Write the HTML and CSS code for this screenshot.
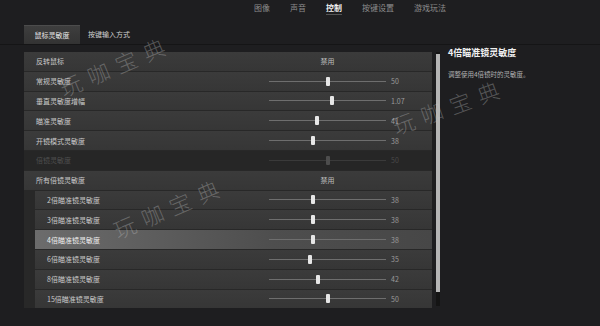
FILE: index.html
```html
<!DOCTYPE html>
<html lang="zh-CN">
<head>
    <meta charset="UTF-8">
    <title>控制设置</title>
    <link rel="stylesheet" href="styles.css">
</head>
<body>
    <div id="screen">
        <ul id="nav">
            <li>图像</li>
            <li>声音</li>
            <li class="selected">控制</li>
            <li>按键设置</li>
            <li>游戏玩法</li>
        </ul>
        <div id="top-bar">
            <ul id="sub-tab">
                <li class="selected">鼠标灵敏度</li>
                <li>按键输入方式</li>
            </ul>
        </div>
        <div id="main">
            <div id="list">
                <div class="row">
                    <span class="label">反转鼠标</span>
                    <span class="choice">禁用</span>
                </div>
                <div class="row">
                    <span class="label">常规灵敏度</span>
                    <span class="slider"><i style="left: 50%"></i></span>
                    <span class="num">50</span>
                </div>
                <div class="row">
                    <span class="label">垂直灵敏度增幅</span>
                    <span class="slider"><i style="left: 54%"></i></span>
                    <span class="num">1.07</span>
                </div>
                <div class="row">
                    <span class="label">瞄准灵敏度</span>
                    <span class="slider"><i style="left: 41%"></i></span>
                    <span class="num">41</span>
                </div>
                <div class="row">
                    <span class="label">开镜模式灵敏度</span>
                    <span class="slider"><i style="left: 38%"></i></span>
                    <span class="num">38</span>
                </div>
                <div class="row disabled">
                    <span class="label">倍镜灵敏度</span>
                    <span class="slider"><i style="left: 50%"></i></span>
                    <span class="num">50</span>
                </div>
                <div class="row">
                    <span class="label">所有倍镜灵敏度</span>
                    <span class="choice">禁用</span>
                </div>
                <div class="row sub">
                    <span class="label">2倍瞄准镜灵敏度</span>
                    <span class="slider"><i style="left: 38%"></i></span>
                    <span class="num">38</span>
                </div>
                <div class="row sub">
                    <span class="label">3倍瞄准镜灵敏度</span>
                    <span class="slider"><i style="left: 38%"></i></span>
                    <span class="num">38</span>
                </div>
                <div class="row sub active">
                    <span class="label">4倍瞄准镜灵敏度</span>
                    <span class="slider"><i style="left: 38%"></i></span>
                    <span class="num">38</span>
                </div>
                <div class="row sub">
                    <span class="label">6倍瞄准镜灵敏度</span>
                    <span class="slider"><i style="left: 35%"></i></span>
                    <span class="num">35</span>
                </div>
                <div class="row sub">
                    <span class="label">8倍瞄准镜灵敏度</span>
                    <span class="slider"><i style="left: 42%"></i></span>
                    <span class="num">42</span>
                </div>
                <div class="row sub">
                    <span class="label">15倍瞄准镜灵敏度</span>
                    <span class="slider"><i style="left: 50%"></i></span>
                    <span class="num">50</span>
                </div>
            </div>
            <div id="scroll"><b></b></div>
            <div id="info">
                <h2>4倍瞄准镜灵敏度</h2>
                <p>调整使用4倍镜时的灵敏度。</p>
            </div>
        </div>
        <span class="mark mark-1">玩咖宝典</span>
        <span class="mark mark-2">玩咖宝典</span>
        <span class="mark mark-3">玩咖宝典</span>
    </div>
</body>
</html>
```
FILE: styles.css
```css
*{
    margin: 0;
    padding: 0;
    box-sizing: border-box;
}
ul{
    list-style: none;
}
body{
    background: #1d1d1f;
    font-family: "Noto Sans CJK SC", "Noto Sans", sans-serif;
    color: #b8b8b8;
}
#screen{
    width: 600px;
    height: 326px;
    position: relative;
    overflow: hidden;
    background: #1e1e20;
}
#nav{
    display: flex;
    gap: 20px;
    padding: 2px 0 0 254px;
    height: 25px;
    font-size: 8px;
    line-height: 12px;
    color: #8d8d8d;
}
#nav .selected{
    color: #f2f2f2;
    font-weight: bold;
    border-bottom: 1px solid #555;
    height: 13px;
}
#top-bar{
    border-bottom: 1px solid #151516;
    height: 20px;
    padding-left: 24px;
}
#sub-tab{
    display: flex;
    gap: 8px;
}
#sub-tab li{
    height: 19px;
    line-height: 18px;
    font-size: 7px;
    color: #cfcfcf;
}
#sub-tab .selected{
    width: 56px;
    text-align: center;
    background: linear-gradient(#3e3e3e, #333);
    border-top: 1px solid #4c4c4c;
    color: #e8e8e8;
}
#main{
    display: flex;
    padding-top: 7px;
}
#list{
    width: 408px;
    margin-left: 24px;
    background: #282828;
    display: flex;
    flex-direction: column;
    gap: 1px;
}
.row{
    height: 18.8px;
    display: flex;
    align-items: center;
    background: linear-gradient(#3b3b3b, #363636);
    font-size: 7px;
    color: #c8c8c8;
}
.row.sub{
    margin-left: 11px;
}
.row.active{
    background: linear-gradient(90deg, #6c6c6c, #4e4e4e 60%, #474747);
    color: #eee;
}
.row.disabled{
    background: #262626;
    color: #4e4e4e;
}
.label{
    width: 245px;
    padding-left: 12px;
}
.sub .label{
    width: 234px;
}
.choice{
    width: 117px;
    text-align: center;
    color: #bdbdbd;
}
.slider{
    width: 117px;
    height: 1px;
    background: #6e6e6e;
    position: relative;
}
.slider i{
    position: absolute;
    top: -4px;
    width: 4px;
    height: 9px;
    margin-left: -2px;
    background: #e6e6e6;
    border-radius: 1px;
}
.num{
    padding-left: 5px;
    color: #9a9a9a;
}
.disabled .slider{
    background: #3a3a3a;
}
.disabled .slider i{
    background: #4d4d4d;
}
.disabled .num{
    color: #4a4a4a;
}
#scroll{
    width: 4px;
    margin-left: 4px;
    height: 254px;
    background: #141414;
}
#scroll b{
    display: block;
    margin-top: 2px;
    height: 238px;
    background: #b5b5b5;
}
#info{
    padding-left: 8px;
}
#info h2{
    font-size: 9px;
    color: #f0f0f0;
    line-height: 12px;
    margin-top: -5px;
}
#info p{
    font-size: 6.5px;
    color: #b0b0b0;
    margin-top: 10px;
}
.mark{
    position: absolute;
    font-family: "Noto Sans CJK SC", serif;
    font-weight: 300;
    font-size: 22px;
    line-height: 30px;
    letter-spacing: 8px;
    color: rgba(200, 200, 200, 0.32);
    transform: rotate(-23deg);
    transform-origin: left bottom;
    white-space: nowrap;
}
.mark-1{
    left: 66px;
    top: 72px;
}
.mark-2{
    left: 398px;
    top: 110px;
    transform: rotate(-20deg);
}
.mark-3{
    left: 120px;
    top: 214px;
}
```
